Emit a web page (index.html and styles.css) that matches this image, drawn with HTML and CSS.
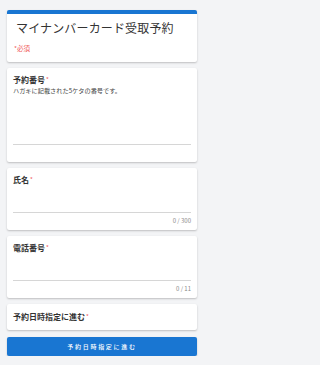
FILE: index.html
```html
<!DOCTYPE html>
<html lang="ja">
<head>
<meta charset="utf-8">
<link rel="stylesheet" href="styles.css">
</head>
<body>
<main class="form">
  <section class="card head">
    <h1 class="title">マイナンバーカード受取予約</h1>
    <p class="req-note">*必須</p>
  </section>
  <section class="card field">
    <div class="label">予約番号<span class="ast">*</span></div>
    <div class="desc">ハガキに記載された5ケタの番号です。</div>
    <div class="input tall"></div>
    <div class="counter"></div>
  </section>
  <section class="card field">
    <div class="label">氏名<span class="ast">*</span></div>
    <div class="input"></div>
    <div class="counter">0 / 300</div>
  </section>
  <section class="card field">
    <div class="label">電話番号<span class="ast">*</span></div>
    <div class="input"></div>
    <div class="counter">0 / 11</div>
  </section>
  <section class="card short">
    <div class="label">予約日時指定に進む<span class="ast">*</span></div>
  </section>
  <button class="submit">予約日時指定に進む</button>
</main>
</body>
</html>
```
FILE: styles.css
```css
html, body {
  margin: 0;
  padding: 0;
  background: #f3f4f6;
}
body {
  font-family: "Noto Sans CJK JP", "Noto Sans", sans-serif;
  color: #333;
}
.form {
  width: 204px;
  box-sizing: border-box;
  display: flex;
  flex-direction: column;
  gap: 6px;
  padding: 10px 7px 0 7px;
}
.card {
  background: #fff;
  border-radius: 2px;
  box-shadow: 0 1px 2px rgba(0,0,0,0.22);
}
.head {
  border-top: 4px solid #1976d2;
  padding: 7px 9px 8px 9px;
  height: 33px;
}
.title {
  margin: 0;
  font-size: 12px;
  line-height: 14px;
  font-weight: 400;
  letter-spacing: 0.15px;
  color: #333;
}
.req-note {
  margin: 9px 0 0 -2px;
  font-size: 6.5px;
  line-height: 8px;
  color: #f05a5a;
}
.field {
  padding: 7px 6px 6px 6px;
  display: flex;
  flex-direction: column;
}
.label {
  font-size: 8px;
  line-height: 10px;
  font-weight: 700;
  color: #333;
}
.ast {
  color: #f05a5a;
  font-weight: 400;
  font-size: 6px;
  margin-left: 1px;
  position: relative;
  top: -1px;
}
.desc {
  font-size: 6.2px;
  line-height: 8px;
  margin-top: 1px;
  color: #444;
}
.input {
  height: 26px;
  border-bottom: 1px solid #d6d6d6;
}
.input.tall {
  height: 49px;
}
.counter {
  font-size: 6px;
  line-height: 7px;
  margin-top: 4px;
  height: 7px;
  text-align: right;
  color: #888;
}
.short {
  padding: 8px 6px 7px 6px;
}
.submit {
  margin: 1px 0 0 0;
  height: 19px;
  border: none;
  border-radius: 2px;
  background: #1976d2;
  color: #fff;
  font-family: "Noto Sans CJK JP", "Noto Sans", sans-serif;
  font-size: 6px;
  font-weight: 500;
  letter-spacing: 1.7px;
  padding: 0;
  box-shadow: 0 1px 2px rgba(0,0,0,0.2);
}
```
